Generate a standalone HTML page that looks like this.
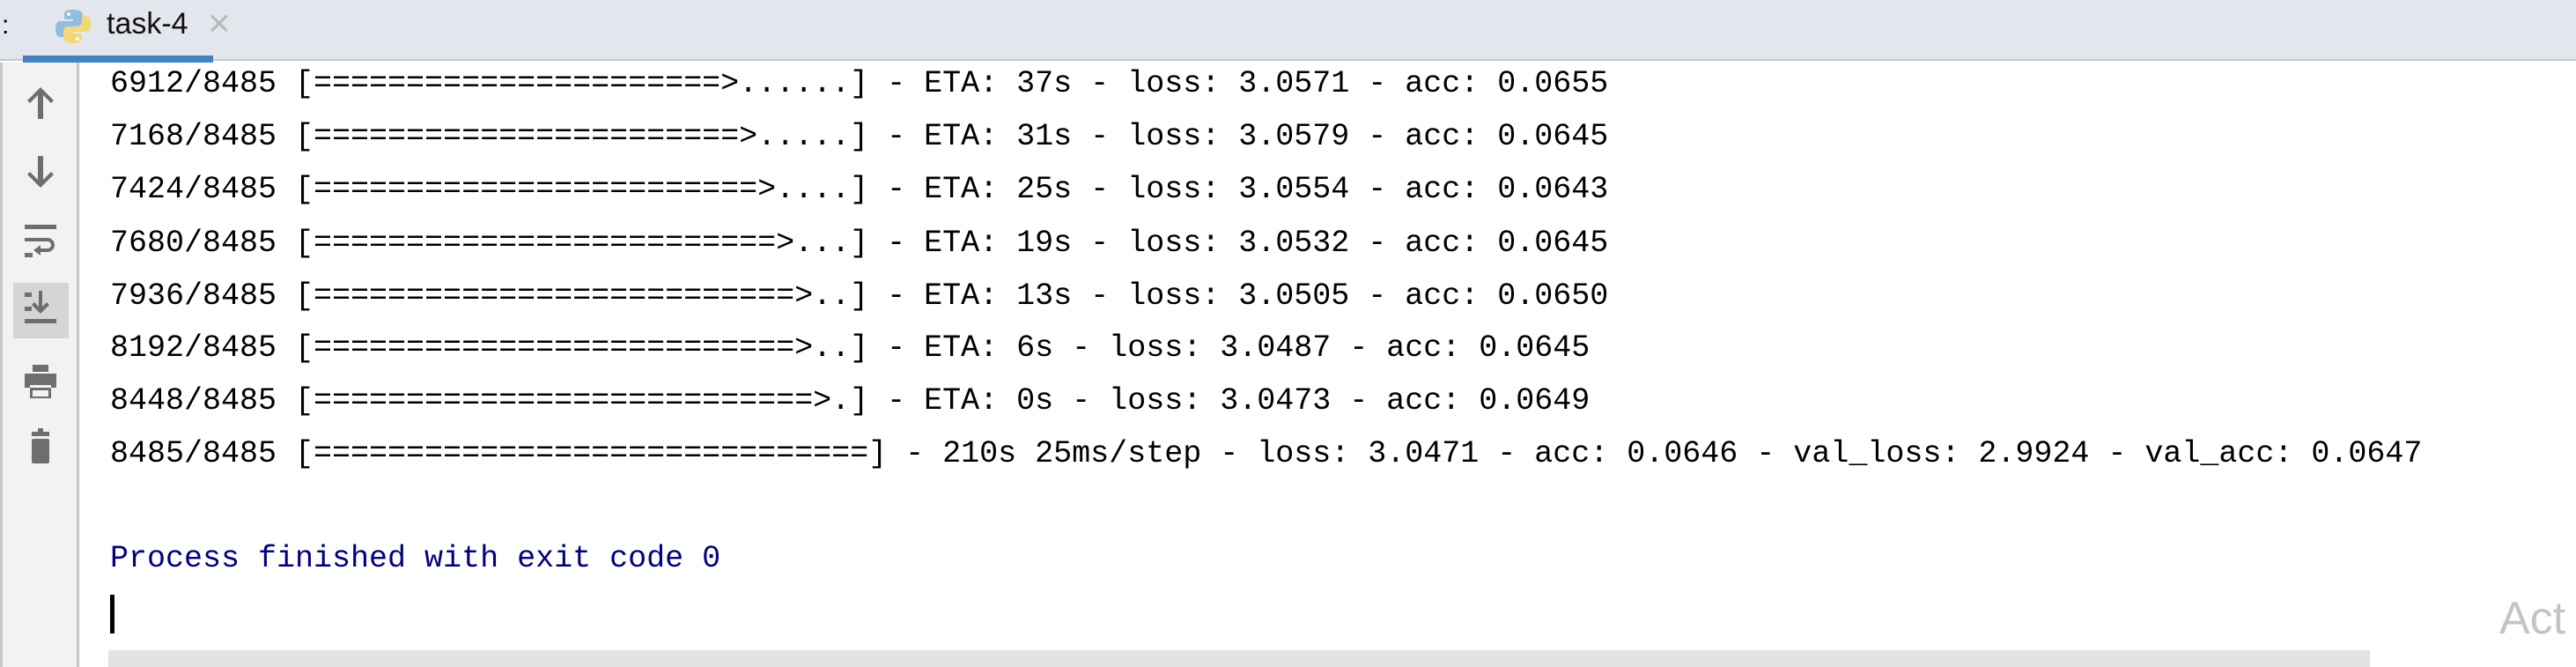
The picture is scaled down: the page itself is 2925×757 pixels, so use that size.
<!DOCTYPE html>
<html><head><meta charset="utf-8"><style>
html,body{margin:0;padding:0;width:2925px;height:757px;overflow:hidden;background:#fff;position:relative}
.tabbar{position:absolute;left:0;top:0;width:2925px;height:69px;background:#e4e6ee;border-bottom:2px solid #c9c9c9;box-sizing:border-box}
.ul{position:absolute;left:26px;top:63px;width:216px;height:8px;background:#4283c8}
.tabt{position:absolute;left:121px;top:8px;font:34px "Liberation Sans",sans-serif;color:#111}
.x{position:absolute;left:236px;top:2px;font:44px "Liberation Sans",sans-serif;color:#b9b9b9}
.side{position:absolute;left:0;top:71px;width:90px;height:686px;background:#f2f2f2;border-left:3px solid #c8c8c8;border-right:3px solid #c8c8c8;box-sizing:border-box}
.hl{position:absolute;left:15px;top:321px;width:63px;height:63px;background:#d5d5d5}
.line{position:absolute;left:125px;font:35px "Liberation Mono",monospace;color:#000;white-space:pre;line-height:40px}
.proc{color:#000080}
.cur{position:absolute;left:125px;top:675px;width:5px;height:44px;background:#000}
.bar{position:absolute;left:123px;top:738px;width:2568px;height:19px;background:#e2e2e2}
.act{position:absolute;left:2838px;top:672px;font:52px "Liberation Sans",sans-serif;color:#c4c4c4}
</style></head><body>
<div class="tabbar"></div>
<div style="position:absolute;left:2px;top:12px;font:30px 'Liberation Sans',sans-serif">:</div>
<svg style="position:absolute;left:62px;top:9px" width="42" height="42" viewBox="0 0 42 42">
<path d="M20 2c-8 0-9 3-9 6v5h10v2H7c-4 0-6 3-6 9s2 9 6 9h4v-6c0-4 3-6 6-6h10c3 0 5-2 5-5V8c0-4-4-6-12-6z" fill="#8fbfdf"/>
<path d="M22 40c8 0 9-3 9-6v-5H21v-2h14c4 0 6-3 6-9s-2-9-6-9h-4v6c0 4-3 6-6 6H15c-3 0-5 2-5 5v8c0 4 4 6 12 6z" fill="#f3d87a"/>
<circle cx="16" cy="7" r="2" fill="#fff"/><circle cx="26" cy="35" r="2" fill="#fff"/>
</svg>
<div class="tabt">task-4</div>
<div class="x">×</div>
<div class="ul"></div>
<div class="side"></div>
<div class="hl"></div>
<svg style="position:absolute;left:0;top:71px" width="90" height="480" viewBox="0 71 90 480" fill="#6e6e6e">
<path d="M43 135V108l-9 9-3-3 15-15 15 15-3 3-9-9v27z"/>
<path d="M43 177v27l-9-9-3 3 15 15 15-15-3-3-9 9v-27z"/>
<rect x="28" y="255" width="36" height="5"/>
<path d="M28 270h26a8 8 0 0 1 0 16h-8v4l-8-6 8-6v4h8a4 4 0 0 0 0-8H28z"/>
<rect x="28" y="287" width="9" height="5"/>
<rect x="28" y="332" width="8" height="5"/><rect x="28" y="348" width="8" height="5"/>
<path d="M44 330h4v18l5-5 3 3-10 10-10-10 3-3 5 5z"/>
<rect x="28" y="362" width="36" height="5"/>
<rect x="37" y="414" width="18" height="8"/>
<path d="M28 424h36v16h-6v-3H34v3h-6z"/>
<path d="M34 440h24v12H34zm3 3v7h18v-7z"/>
<rect x="36" y="490" width="20" height="5"/>
<rect x="43" y="486" width="6" height="4"/>
<rect x="36" y="498" width="20" height="28" rx="2"/>
</svg>
<div class="line" style="top:75px">6912/8485 [======================&gt;......] - ETA: 37s - loss: 3.0571 - acc: 0.0655</div>
<div class="line" style="top:135px">7168/8485 [=======================&gt;.....] - ETA: 31s - loss: 3.0579 - acc: 0.0645</div>
<div class="line" style="top:195px">7424/8485 [========================&gt;....] - ETA: 25s - loss: 3.0554 - acc: 0.0643</div>
<div class="line" style="top:256px">7680/8485 [=========================&gt;...] - ETA: 19s - loss: 3.0532 - acc: 0.0645</div>
<div class="line" style="top:316px">7936/8485 [==========================&gt;..] - ETA: 13s - loss: 3.0505 - acc: 0.0650</div>
<div class="line" style="top:375px">8192/8485 [==========================&gt;..] - ETA: 6s - loss: 3.0487 - acc: 0.0645</div>
<div class="line" style="top:435px">8448/8485 [===========================&gt;.] - ETA: 0s - loss: 3.0473 - acc: 0.0649</div>
<div class="line" style="top:495px">8485/8485 [==============================] - 210s 25ms/step - loss: 3.0471 - acc: 0.0646 - val_loss: 2.9924 - val_acc: 0.0647</div>
<div class="line proc" style="top:614px">Process finished with exit code 0</div>
<div class="cur"></div>
<div class="bar"></div>
<div class="act">Act</div>
</body></html>
